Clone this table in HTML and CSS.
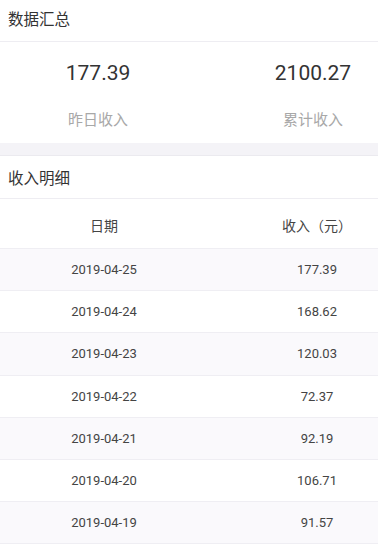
FILE: index.html
```html
<!DOCTYPE html>
<html lang="zh">
<head>
<meta charset="utf-8">
<title>数据汇总</title>
<link rel="stylesheet" href="styles.css">
</head>
<body>
<div class="section-title">数据汇总</div>
<div class="summary">
  <div class="stat">
    <div class="stat-value">177.39</div>
    <div class="stat-label">昨日收入</div>
  </div>
  <div class="stat">
    <div class="stat-value">2100.27</div>
    <div class="stat-label">累计收入</div>
  </div>
</div>
<div class="band"></div>
<div class="section-title detail">收入明细</div>
<div class="table">
  <div class="row head"><div class="c-date">日期</div><div class="c-amt">收入（元）</div></div>
  <div class="row"><div class="c-date">2019-04-25</div><div class="c-amt">177.39</div></div>
  <div class="row"><div class="c-date">2019-04-24</div><div class="c-amt">168.62</div></div>
  <div class="row"><div class="c-date">2019-04-23</div><div class="c-amt">120.03</div></div>
  <div class="row"><div class="c-date">2019-04-22</div><div class="c-amt">72.37</div></div>
  <div class="row"><div class="c-date">2019-04-21</div><div class="c-amt">92.19</div></div>
  <div class="row"><div class="c-date">2019-04-20</div><div class="c-amt">106.71</div></div>
  <div class="row"><div class="c-date">2019-04-19</div><div class="c-amt">91.57</div></div>
</div>
</body>
</html>
```
FILE: styles.css
```css
html, body {
  margin: 0;
  padding: 0;
  background: #ffffff;
}
body {
  font-family: Roboto, "Noto Sans CJK SC", sans-serif;
  color: #333333;
  width: 378px;
  overflow: hidden;
}
.section-title {
  height: 41px;
  line-height: 41px;
  padding-left: 8px;
  font-size: 15.5px;
  color: #333333;
  border-bottom: 1px solid #eeedf2;
}
.section-title.detail {
  height: 42px;
  line-height: 46px;
}
.summary {
  display: flex;
  justify-content: space-between;
  padding: 16px 5px 13px 38px;
}
.stat {
  width: 120px;
  text-align: center;
}
.stat-value {
  font-size: 21px;
  line-height: 30px;
  color: #333333;
}
.stat-label {
  margin-top: 22px;
  font-size: 15px;
  line-height: 20px;
  color: #a8a8a8;
}
.band {
  height: 12px;
  background: #f4f3f7;
  border-bottom: 1px solid #ebeaef;
}
.table {
  display: flex;
  flex-direction: column;
}
.row {
  display: grid;
  grid-template-columns: 208px 1fr;
  align-items: center;
  height: 41.2px;
  border-bottom: 1px solid #efeef3;
  font-size: 13px;
  color: #444444;
}
.row:nth-child(even) {
  background: #faf9fc;
}
.row.head {
  height: 47px;
  padding-top: 2px;
  font-size: 14px;
  color: #444444;
}
.c-date {
  text-align: center;
}
.c-amt {
  text-align: center;
  padding-left: 48px;
}
```
